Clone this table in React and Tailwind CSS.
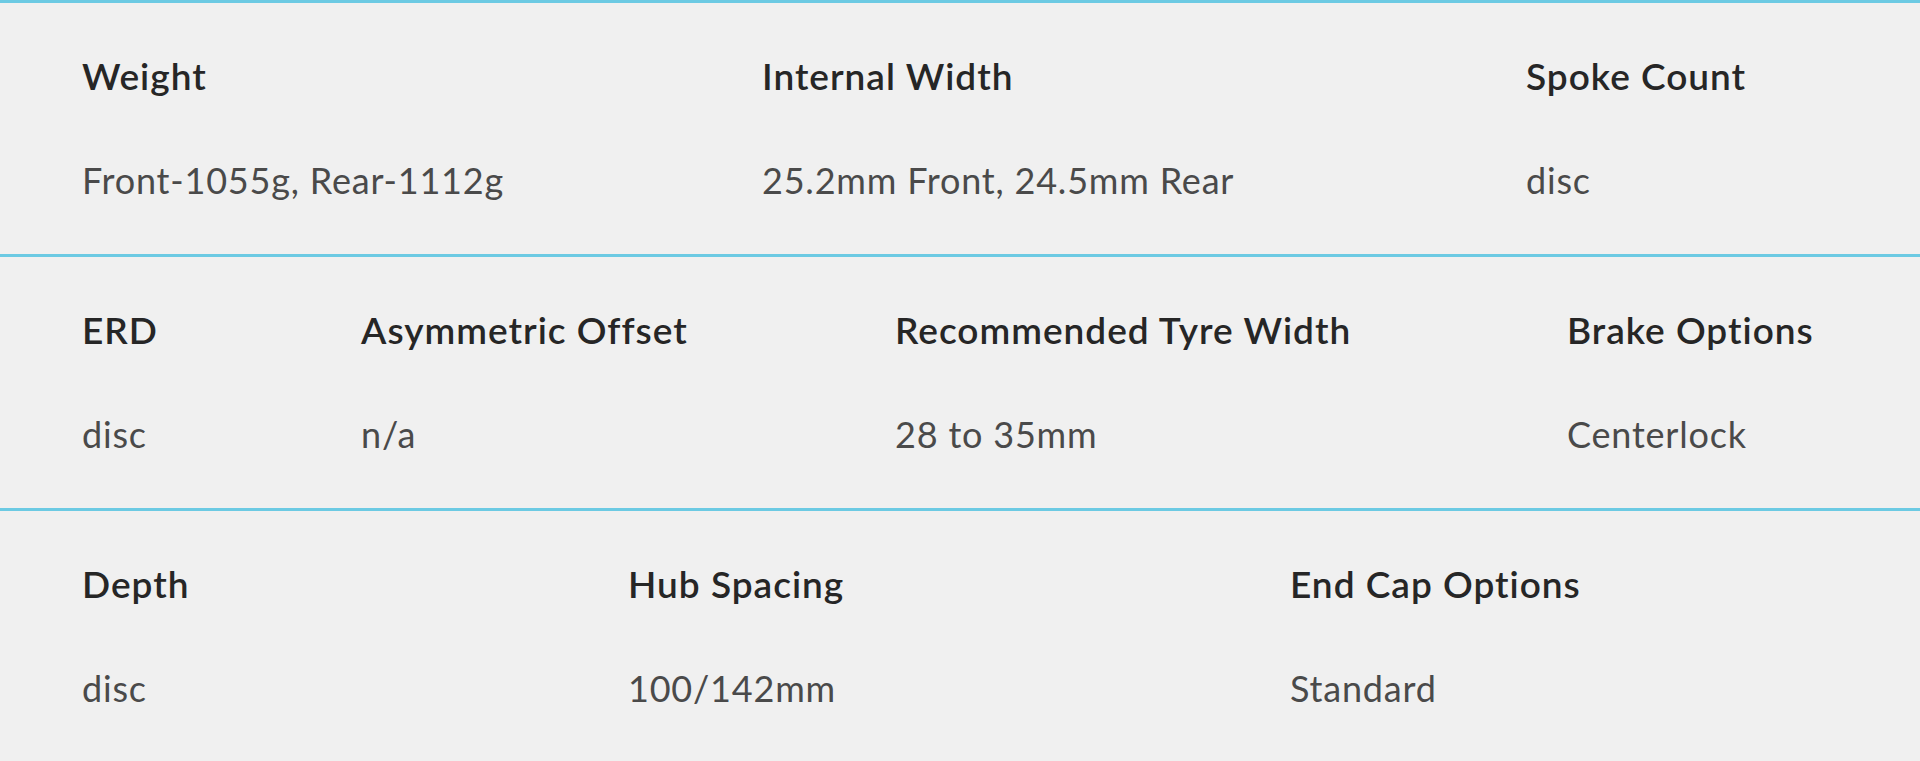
import React from 'react'

const rows = [
  {
    cols: 'grid-cols-[680px_764px_1fr]',
    items: [
      ['Weight', 'Front-1055g, Rear-1112g'],
      ['Internal Width', '25.2mm Front, 24.5mm Rear'],
      ['Spoke Count', 'disc'],
    ],
  },
  {
    cols: 'grid-cols-[279px_534px_672px_1fr]',
    items: [
      ['ERD', 'disc'],
      ['Asymmetric Offset', 'n/a'],
      ['Recommended Tyre Width', '28 to 35mm'],
      ['Brake Options', 'Centerlock'],
    ],
  },
  {
    cols: 'grid-cols-[546px_662px_1fr]',
    items: [
      ['Depth', 'disc'],
      ['Hub Spacing', '100/142mm'],
      ['End Cap Options', 'Standard'],
    ],
  },
]

export default function App() {
  return (
    <div className="min-h-[761px] w-[1920px] overflow-hidden bg-[#f0f0f0] font-['Lato','Open_Sans',sans-serif]">
      {rows.map((row, i) => (
        <div key={i} className={`grid ${row.cols} h-[254px] border-t-[3px] border-[#6ccae3] pl-[82px] pt-[54px]`}>
          {row.items.map(([label, value]) => (
            <div key={label} className="flex flex-col">
              <div className="text-[37px] leading-none font-semibold tracking-[1px] text-[#262626] whitespace-nowrap">{label}</div>
              <div className="mt-[68px] text-[36px] leading-none tracking-[0.8px] text-[#4a4a4a] whitespace-nowrap">{value}</div>
            </div>
          ))}
        </div>
      ))}
    </div>
  )
}
